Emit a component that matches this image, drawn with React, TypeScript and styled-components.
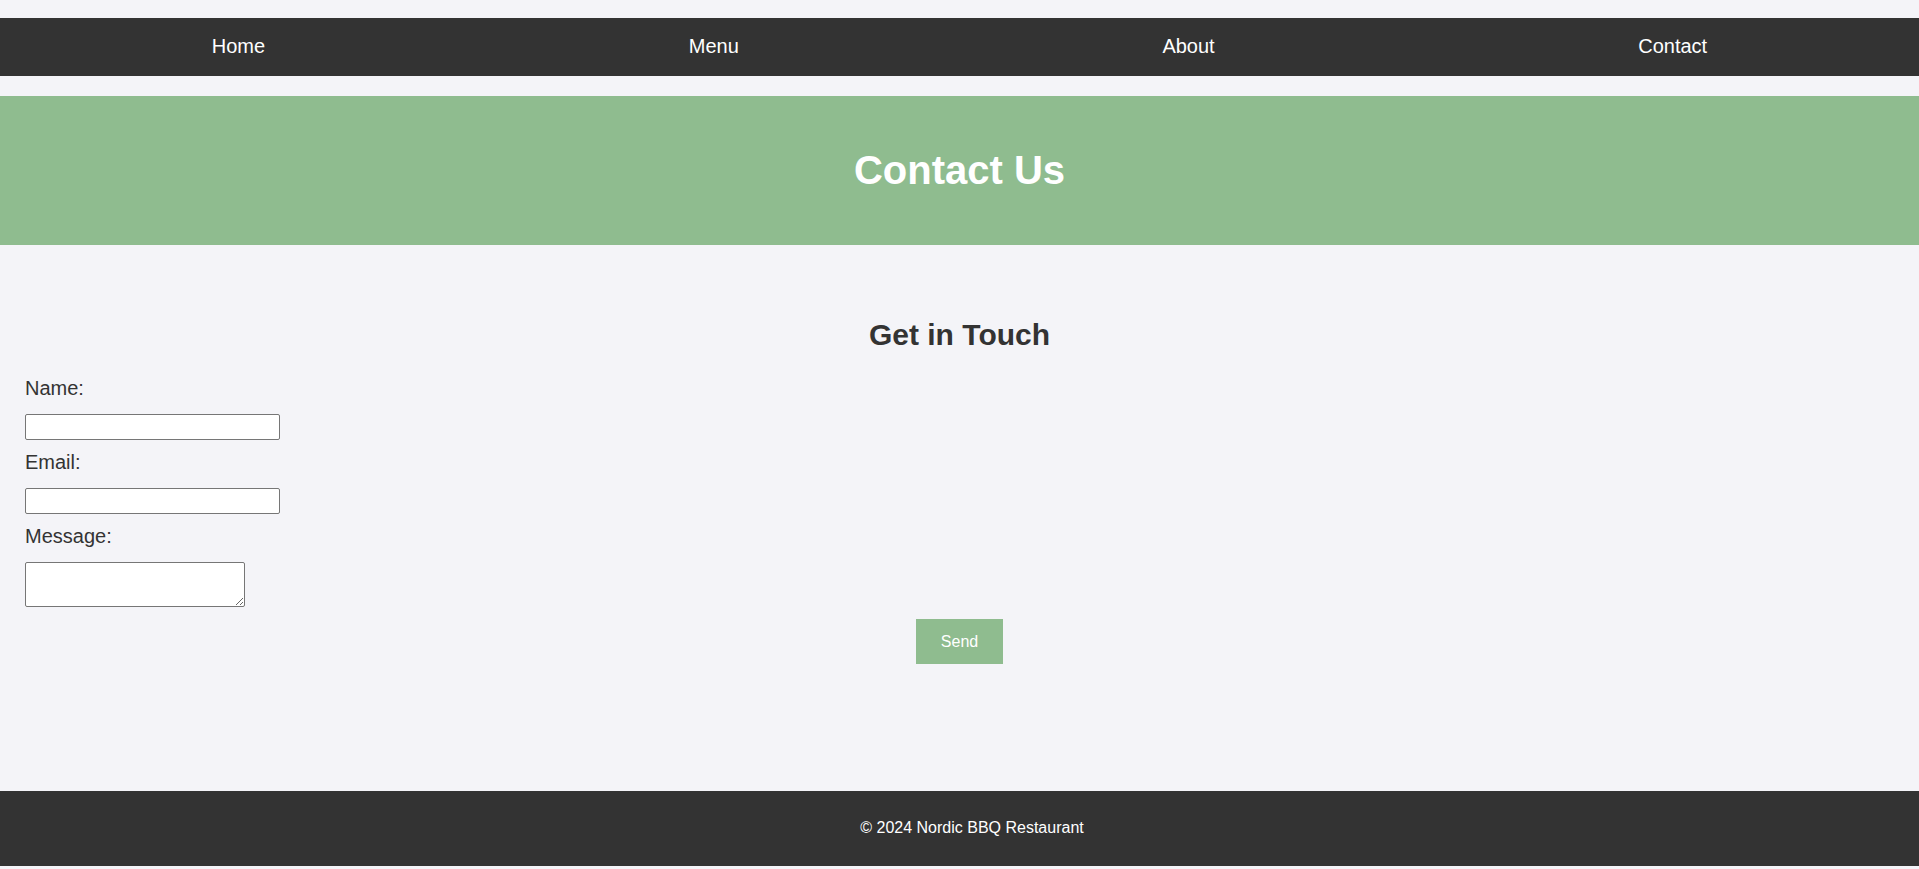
import React from "react";
import styled, { createGlobalStyle } from "styled-components";

const GlobalStyle = createGlobalStyle`
  html, body {
    margin: 0;
    padding: 0;
    background: #f4f4f8;
  }
  body {
    font-family: "Liberation Sans", Arial, sans-serif;
    color: #333333;
  }
  * { box-sizing: border-box; }
`;

const Page = styled.div`
  padding-top: 18px;
  display: flex;
  flex-direction: column;
`;

const Nav = styled.nav`
  background: #333333;
`;

const NavList = styled.ul`
  list-style: none;
  margin: 0;
  padding: 17px 0 18px;
  display: flex;
  justify-content: space-around;
`;

const NavItem = styled.li`
  font-size: 20px;
  line-height: 23px;
  color: #ffffff;
`;

const Hero = styled.header`
  margin-top: 20px;
  background: #8fbc8f;
  padding: 51px 0 52px;
  text-align: center;
`;

const HeroTitle = styled.h1`
  margin: 0;
  font-size: 40px;
  line-height: 46px;
  font-weight: 700;
  color: #ffffff;
`;

const Main = styled.main`
  padding: 72px 25px 0;
  height: 546px;
`;

const SectionTitle = styled.h2`
  margin: 0 0 25px;
  text-align: center;
  font-size: 30px;
  line-height: 35px;
  font-weight: 700;
  color: #333333;
`;

const Form = styled.form`
  display: flex;
  flex-direction: column;
  align-items: flex-start;
`;

const Label = styled.label`
  display: block;
  font-size: 20px;
  line-height: 23px;
  color: #333333;
  margin-bottom: 14px;
`;

const TextInput = styled.input`
  width: 255px;
  height: 26px;
  margin: 0 0 11px;
  border: 1px solid #767676;
  border-radius: 2px;
  background: #ffffff;
  font-family: inherit;
`;

const TextArea = styled.textarea`
  width: 220px;
  height: 45px;
  margin: 0 0 12px;
  border: 1px solid #767676;
  border-radius: 2px;
  background: #ffffff;
  font-family: inherit;
`;

const SendButton = styled.button`
  align-self: center;
  background: #8fbc8f;
  color: #ffffff;
  border: none;
  padding: 13px 25px;
  font-family: inherit;
  font-size: 16px;
  line-height: 19px;
  cursor: pointer;
`;

const Footer = styled.footer`
  background: #333333;
  color: #ffffff;
  text-align: center;
  font-size: 16px;
  line-height: 18px;
  padding: 28px 0 29px 25px;
`;

const navLinks = ["Home", "Menu", "About", "Contact"];

export default function App() {
  return (
    <>
      <GlobalStyle />
      <Page>
        <Nav>
          <NavList>
            {navLinks.map((l) => (
              <NavItem key={l}>{l}</NavItem>
            ))}
          </NavList>
        </Nav>
        <Hero>
          <HeroTitle>Contact Us</HeroTitle>
        </Hero>
        <Main>
          <SectionTitle>Get in Touch</SectionTitle>
          <Form onSubmit={(e) => e.preventDefault()}>
            <Label htmlFor="name">Name:</Label>
            <TextInput id="name" type="text" />
            <Label htmlFor="email">Email:</Label>
            <TextInput id="email" type="email" />
            <Label htmlFor="message">Message:</Label>
            <TextArea id="message" />
            <SendButton type="submit">Send</SendButton>
          </Form>
        </Main>
        <Footer>© 2024 Nordic BBQ Restaurant</Footer>
      </Page>
    </>
  );
}
